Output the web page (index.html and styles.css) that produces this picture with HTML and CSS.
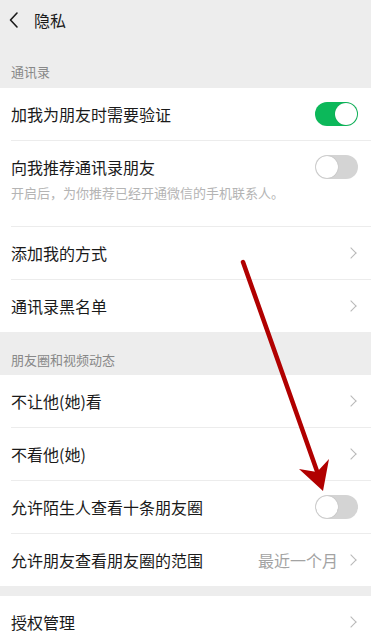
FILE: index.html
```html
<!DOCTYPE html>
<html lang="zh-CN">
<head>
    <meta charset="UTF-8">
    <meta name="viewport" content="width=device-width, initial-scale=1.0">
    <title>隐私</title>
    <link rel="stylesheet" href="styles.css">
</head>
<body>
    <div class="page">
        <div class="nav">
            <svg class="back" width="12" height="18" viewBox="0 0 12 18">
                <path d="M9 2 L2.5 9 L9 16" fill="none" stroke="#1a1a1a" stroke-width="1.6" stroke-linecap="round" stroke-linejoin="round"/>
            </svg>
            <span class="nav-title">隐私</span>
        </div>

        <div class="section-title first">通讯录</div>
        <div class="group">
            <div class="cell">
                <span class="cell-text">加我为朋友时需要验证</span>
                <span class="switch on"></span>
            </div>
            <div class="cell cell-desc">
                <div class="cell-row">
                    <span class="cell-text">向我推荐通讯录朋友</span>
                    <span class="switch"></span>
                </div>
                <div class="desc">开启后，为你推荐已经开通微信的手机联系人。</div>
            </div>
            <div class="cell">
                <span class="cell-text">添加我的方式</span>
                <span class="chevron"></span>
            </div>
            <div class="cell">
                <span class="cell-text">通讯录黑名单</span>
                <span class="chevron"></span>
            </div>
        </div>

        <div class="section-title">朋友圈和视频动态</div>
        <div class="group">
            <div class="cell">
                <span class="cell-text">不让他(她)看</span>
                <span class="chevron"></span>
            </div>
            <div class="cell">
                <span class="cell-text">不看他(她)</span>
                <span class="chevron"></span>
            </div>
            <div class="cell">
                <span class="cell-text">允许陌生人查看十条朋友圈</span>
                <span class="switch"></span>
            </div>
            <div class="cell">
                <span class="cell-text">允许朋友查看朋友圈的范围</span>
                <span class="cell-right">
                    <span class="value">最近一个月</span>
                    <span class="chevron"></span>
                </span>
            </div>
        </div>

        <div class="group spaced">
            <div class="cell">
                <span class="cell-text">授权管理</span>
                <span class="chevron"></span>
            </div>
        </div>

        <!-- red arrow drawn over the screenshot -->
        <svg class="mark" width="371" height="641" viewBox="0 0 371 641">
            <line x1="243" y1="262" x2="318" y2="474" stroke="#b10000" stroke-width="4.5" stroke-linecap="round"/>
            <polygon points="299,469 323,491 329,459 317,472" fill="#b10000"/>
        </svg>
    </div>
</body>
</html>
```

FILE: styles.css
```css
body {
    margin: 0;
    background-color: #ededed;
    font-family: "Noto Sans CJK SC", "Noto Sans", sans-serif;
    color: #1a1a1a;
}

.page {
    position: relative;
    width: 371px;
    height: 641px;
    overflow: hidden;
}

.nav {
    height: 40px;
    display: flex;
    align-items: center;
    padding-left: 8px;
}

.back {
    margin-right: 14px;
}

.nav-title {
    font-size: 16px;
    line-height: 20px;
}

.section-title {
    height: 43px;
    box-sizing: border-box;
    padding: 19px 0 0 11px;
    font-size: 13px;
    line-height: 18px;
    color: #888;
}

.section-title.first {
    height: 48px;
    padding-top: 23px;
}

.group {
    background-color: #fff;
}

.group.spaced {
    margin-top: 10px;
}

.cell {
    position: relative;
    display: flex;
    align-items: center;
    justify-content: space-between;
    height: 52px;
    padding: 0 13px 0 11px;
}

.cell + .cell {
    border-top: 1px solid transparent;
}

.cell + .cell::before {
    content: "";
    position: absolute;
    top: -1px;
    left: 11px;
    right: 0;
    height: 1px;
    background-color: #ececec;
}

.cell-text {
    font-size: 16px;
    line-height: 20px;
}

.cell-desc {
    display: block;
    height: auto;
    padding-bottom: 25px;
}

.cell-row {
    display: flex;
    align-items: center;
    justify-content: space-between;
    height: 52px;
}

.desc {
    font-size: 13px;
    line-height: 16px;
    color: #b4b4b4;
    margin-top: -8px;
}

.cell-right {
    display: flex;
    align-items: center;
}

.value {
    font-size: 16px;
    color: #a3a3a3;
    margin-right: 9px;
}

.chevron {
    width: 7px;
    height: 7px;
    margin-right: 3px;
    border-top: 1.4px solid #b8b8b8;
    border-right: 1.4px solid #b8b8b8;
    transform: rotate(45deg);
}

.switch {
    position: relative;
    width: 43px;
    height: 24px;
    border-radius: 12px;
    background-color: #d4d4d4;
}

.switch::after {
    content: "";
    position: absolute;
    top: 1px;
    left: 1px;
    width: 22px;
    height: 22px;
    border-radius: 50%;
    background-color: #fff;
    box-shadow: 0 0 1px rgba(0, 0, 0, 0.3);
}

.switch.on {
    background-color: #0cb85a;
}

.switch.on::after {
    left: 20px;
}

.mark {
    position: absolute;
    top: 0;
    left: 0;
    pointer-events: none;
}
```
